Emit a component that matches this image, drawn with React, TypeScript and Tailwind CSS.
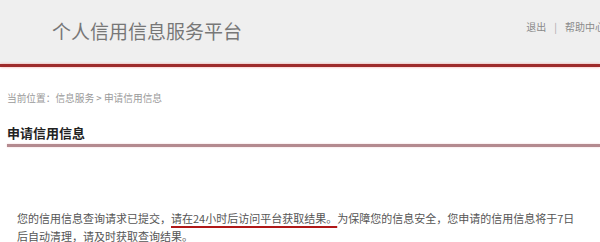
import React from "react";

const font = { fontFamily: '"Noto Sans CJK SC", "Noto Sans", sans-serif' };

export default function App() {
  return (
    <div className="w-[600px] h-[242px] overflow-hidden bg-white" style={font}>
      <div className="h-[64px] bg-[#efefef] flex items-center justify-between">
        <div className="pl-[52px] pb-[4px] text-[19px] leading-none text-[#777777]">个人信用信息服务平台</div>
        <div className="flex items-center gap-[8px] mr-[-5px] pb-[10px] text-[10px] leading-none text-[#8a8a8a] whitespace-nowrap">
          <span>退出</span>
          <span className="text-[#aaaaaa]">|</span>
          <span>帮助中心</span>
        </div>
      </div>
      <div className="h-[3px] bg-[#9e2a2a] shadow-[0_0_3px_#f3a0a0]" />

      <div className="pl-[7px] pt-[25px] text-[9.7px] leading-[12px] text-[#9a9a9a]">
        当前位置：信息服务 &gt; 申请信用信息
      </div>

      <div className="ml-[7px] mt-[21px]">
        <div className="text-[13px] leading-[16px] font-bold text-[#222222] pb-[3px]">申请信用信息</div>
        <div className="h-[3px] bg-[#b48a8f] shadow-[0_0_2px_#f0c8cc]" />
      </div>

      <div className="pl-[17px] mt-[62px] w-[583px] text-[11px] leading-[18px] text-[#555555]">
        您的信用信息查询请求已提交，
        <span className="underline decoration-[#b01818] decoration-2 underline-offset-[3px]">请在24小时后访问平台获取结果。</span>
        为保障您的信息安全，您申请的信用信息将于7日后自动清理，请及时获取查询结果。
      </div>
    </div>
  );
}
